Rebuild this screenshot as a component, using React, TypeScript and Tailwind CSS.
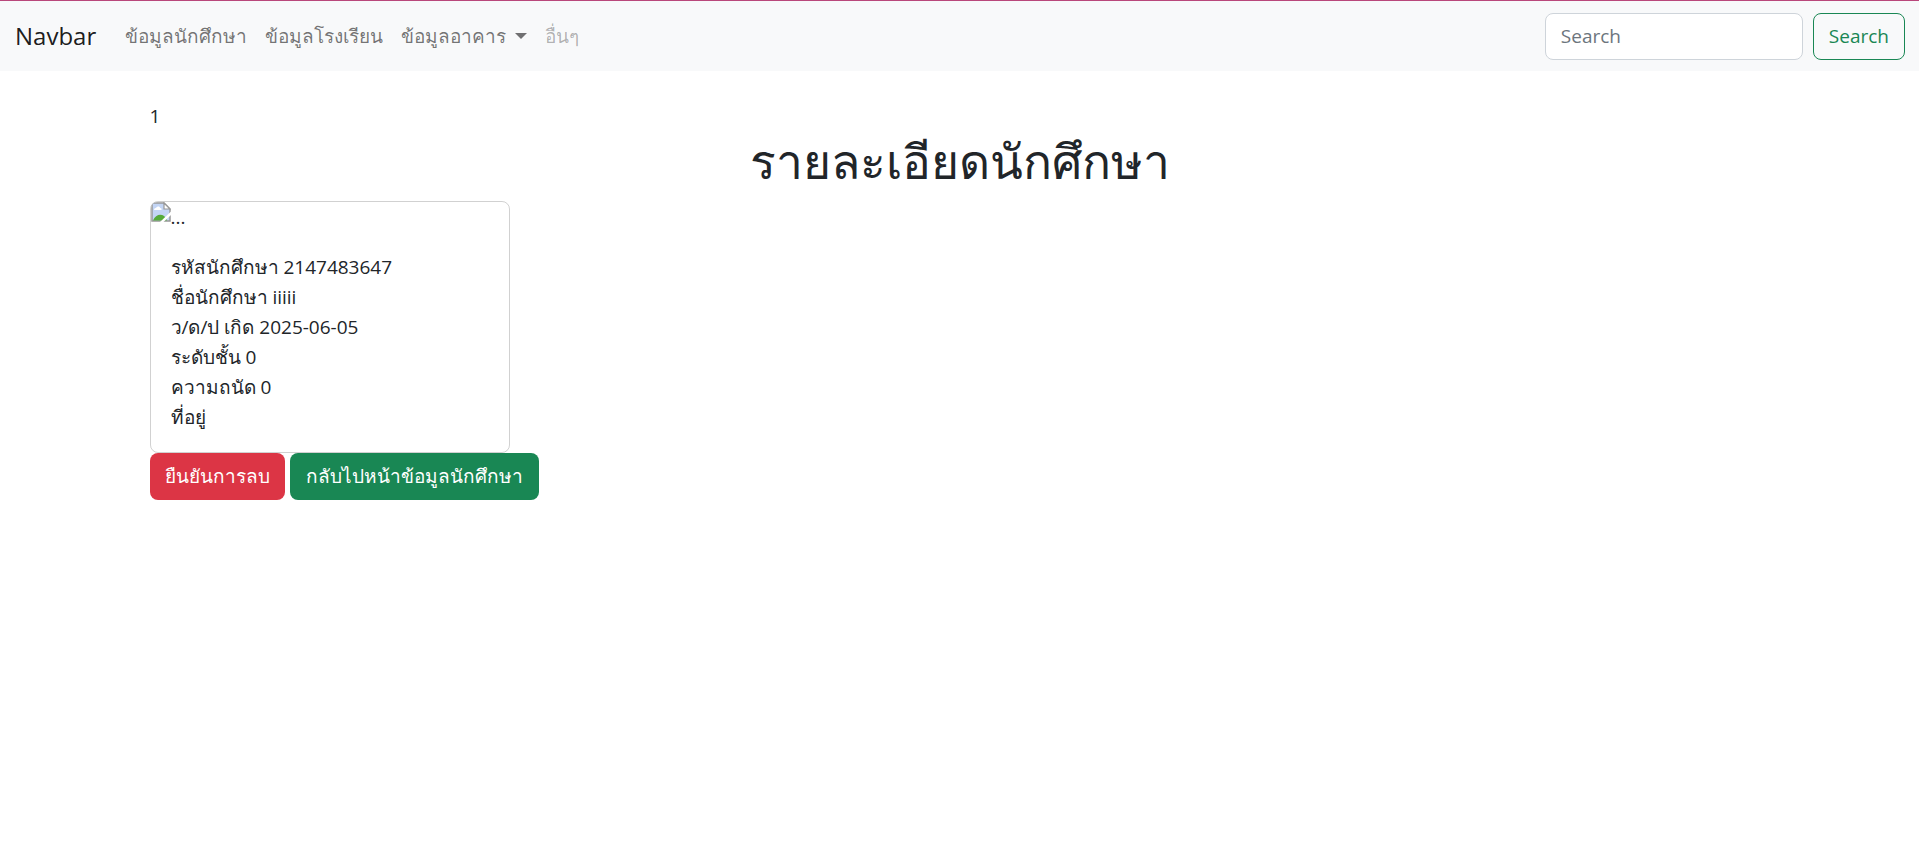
const navLinks = ['ข้อมูลนักศึกษา', 'ข้อมูลโรงเรียน'];

const details = [
  'รหัสนักศึกษา 2147483647',
  'ชื่อนักศึกษา iiiii',
  'ว/ด/ป เกิด 2025-06-05',
  'ระดับชั้น 0',
  'ความถนัด 0',
  'ที่อยู่',
];

function MissingImage() {
  return (
    <svg className="h-5 w-5 shrink-0" viewBox="0 0 20 20" aria-hidden="true">
      <path d="M1 1h12l6 6v12H1z" fill="#c3d5f5" stroke="#989898" strokeWidth="1.5" />
      <path d="M13 1v6h6z" fill="#fff" stroke="#989898" strokeWidth="1.2" />
      <path d="M3 8c0-2 2-2 2-2 1-2 4-2 4 0 2 0 2 2 1 2z" fill="#fff" />
      <path d="M2 18.500c3-7 11-8 14 0z" fill="#55ab3a" />
      <path d="M20 9.500v3.500L12.500 20H9z" fill="#fff" />
    </svg>
  );
}

function Navbar() {
  return (
    <nav className="flex items-center border-t border-[#b9477b] bg-[#f8f9fa] py-[10px] pr-[14px] pl-[15px]">
      <a href="#" className="mr-5 text-2xl leading-[38px] text-black/90">Navbar</a>
      <ul className="flex grow items-center">
        {navLinks.map((label) => (
          <li key={label}>
            <a href="#" className="block px-[9px] py-[10px] text-black/55">{label}</a>
          </li>
        ))}
        <li>
          <button type="button" className="flex items-center gap-[9px] px-[9px] py-[10px] text-black/55">
            ข้อมูลอาคาร
            <svg className="h-[6px] w-3" viewBox="0 0 12 6" aria-hidden="true">
              <path d="M0 0h12L6 6z" fill="currentColor" />
            </svg>
          </button>
        </li>
        <li>
          <a href="#" aria-disabled="true" className="block px-[9px] py-[10px] text-black/30">อื่นๆ</a>
        </li>
      </ul>
      <form role="search" className="flex gap-[10px]">
        <input
          type="search"
          placeholder="Search"
          aria-label="Search"
          className="w-[258px] rounded-lg border border-[#ced4da] bg-white px-[15px] py-2 leading-[29px] placeholder:text-[#6c757d]"
        />
        <button type="submit" className="rounded-lg border border-[#198754] px-[15px] py-2 leading-[29px] text-[#198754]">
          Search
        </button>
      </form>
    </nav>
  );
}

export default function App() {
  return (
    <div className="min-h-screen bg-white font-['Open_Sans','Noto_Sans',sans-serif] text-[19px] leading-[30px] text-[#212529]">
      <Navbar />
      <main className="mx-auto max-w-[1650px] px-[15px] pt-[30px]">
        <p>1</p>
        <h1 className="mb-[10px] text-center text-5xl leading-[60px] font-medium">รายละเอียดนักศึกษา</h1>
        <section className="w-[360px] rounded-lg border border-black/18">
          <div className="flex overflow-hidden rounded-tl-md">
            <MissingImage />
            <span>...</span>
          </div>
          <div className="p-5">
            {details.map((line) => (
              <p key={line}>{line}</p>
            ))}
          </div>
        </section>
        <div className="flex gap-[5px]">
          <button type="button" className="rounded-lg bg-[#dc3545] px-[15px] py-2 leading-[31px] text-white">
            ยืนยันการลบ
          </button>
          <a href="#" className="rounded-lg bg-[#198754] px-4 py-2 leading-[31px] text-white">
            กลับไปหน้าข้อมูลนักศึกษา
          </a>
        </div>
      </main>
    </div>
  );
}
